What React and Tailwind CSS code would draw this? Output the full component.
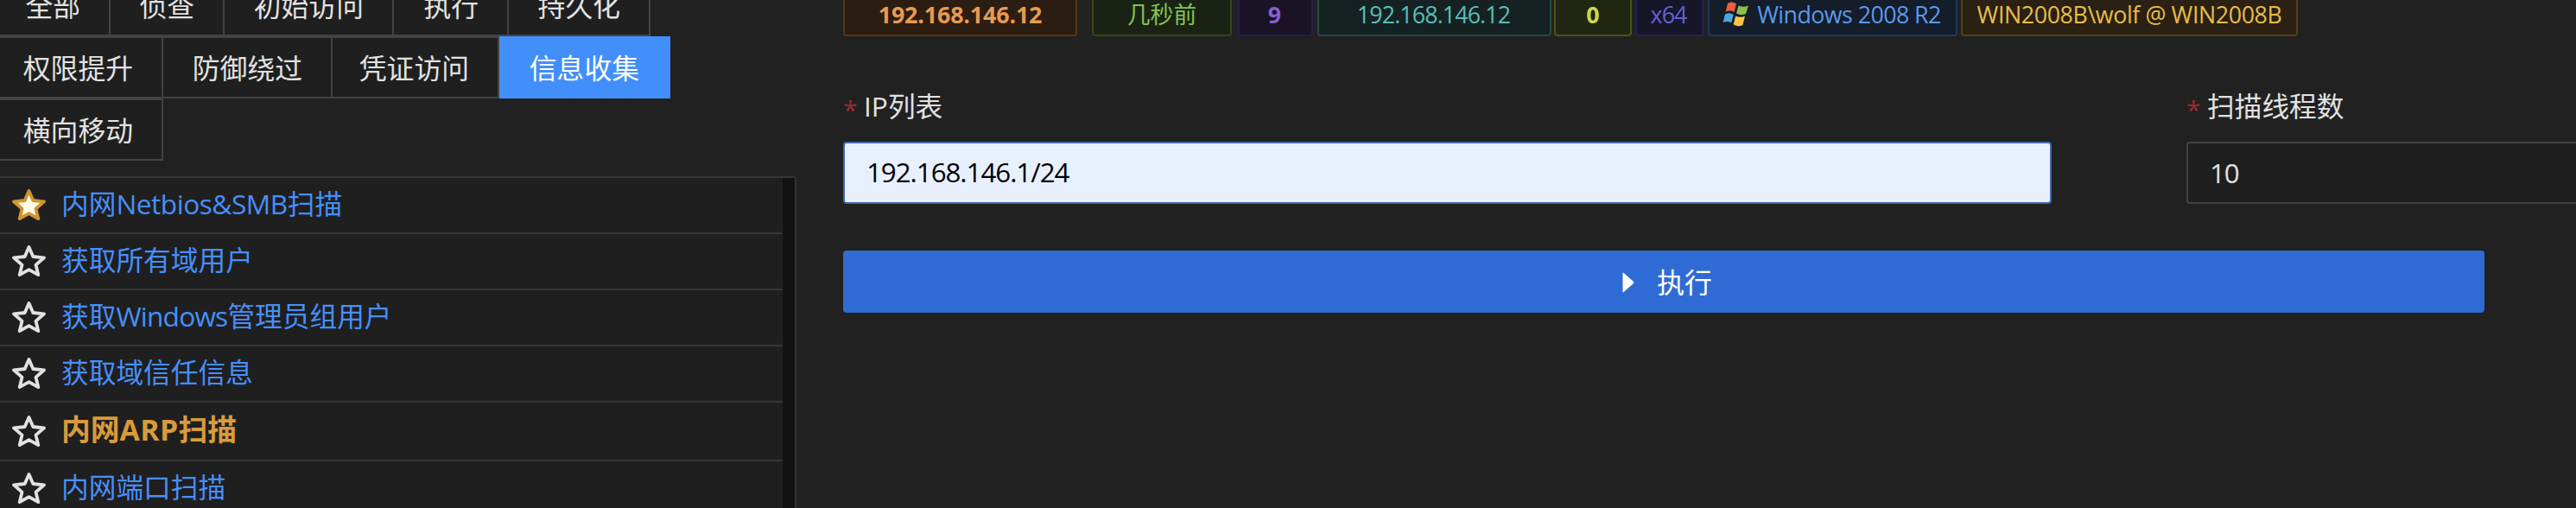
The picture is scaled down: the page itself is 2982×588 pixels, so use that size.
const STAR = "M19.5 3 L24.3 14 L37 15.3 L27.5 23.6 L30.3 35.2 L19.5 29.2 L8.7 35.2 L11.5 23.6 L2 15.3 L14.7 14 Z";

const tabRows = [
  [
    { label: "全部", width: "w-[128px]" },
    { label: "侦查", width: "w-[132px]" },
    { label: "初始访问", width: "w-[196px]" },
    { label: "执行", width: "w-[133px]" },
    { label: "持久化", width: "w-[164px]" },
  ],
  [
    { label: "权限提升", width: "w-[189px]" },
    { label: "防御绕过", width: "w-[196px]" },
    { label: "凭证访问", width: "w-[193px]" },
    { label: "信息收集", width: "w-[198px]", active: true },
  ],
  [{ label: "横向移动", width: "w-[189px]" }],
];

const modules = [
  { parts: ["内网", "Netbios&SMB", "扫描"], starred: true, tracking: "tracking-[-0.016em]" },
  { parts: ["获取所有域用户"] },
  { parts: ["获取", "Windows", "管理员组用户"], tracking: "tracking-[-0.026em]" },
  { parts: ["获取域信任信息"] },
  { parts: ["内网", "ARP", "扫描"], current: true, tracking: "tracking-[0.01em]" },
  { parts: ["内网端口扫描"] },
];

function Tab({ label, width, active }) {
  return (
    <div
      className={`flex h-[72px] shrink-0 items-center justify-end pt-[2px] text-[31.8px] leading-none ${width} ${
        active
          ? "bg-[#428ffb] pr-[36px] text-white"
          : "border-y-2 border-r-2 border-[#434343] bg-[#1f1f1f] pr-[33px] text-[#e2e2e2]"
      }`}
    >
      <span className="whitespace-nowrap">{label}</span>
    </div>
  );
}

function Star({ filled }) {
  return (
    <svg className="ml-[14px] mb-[1px] h-[38px] w-[39px] shrink-0" viewBox="0 0 39 38">
      <path
        d={STAR}
        fill={filled ? "#fffbe6" : "none"}
        stroke={filled ? "#d0952f" : "#e2e2e2"}
        strokeWidth="3.8"
        strokeLinejoin="round"
      />
    </svg>
  );
}

function Latin({ children, tracking = "tracking-[-0.033em]" }) {
  return <span className={tracking}>{children}</span>;
}

function ModuleRow({ parts, starred, current, tracking }) {
  return (
    <div
      className={`flex shrink-0 items-center border-b-2 border-[#363636] leading-none ${
        current ? "h-[68px] text-[33.8px] font-bold text-[#d89b3c]" : "h-[65px] text-[31.7px] text-[#478ffc]"
      }`}
    >
      <Star filled={starred} />
      <div className="ml-[18px] whitespace-nowrap pb-[3px]">
        {parts.map((part) =>
          /^[\x20-\x7e]+$/.test(part) ? (
            <Latin key={part} tracking={tracking}>{part}</Latin>
          ) : (
            <span key={part}>{part}</span>
          )
        )}
      </div>
    </div>
  );
}

function Tag({ className, children }) {
  return (
    <div
      className={`flex h-[50px] shrink-0 items-center justify-center whitespace-nowrap rounded-[4px] border-2 text-[26.8px] leading-none ${className}`}
    >
      {children}
    </div>
  );
}

function WindowsLogo() {
  return (
    <svg className="mr-[9px] h-[30px] w-[31px] shrink-0" viewBox="0 0 31 30">
      <path d="M6 2 Q11 -1 16 2.5 L13.5 12 Q9 9.5 3.5 11.5 Z" fill="#e8603c" />
      <path d="M18.5 4.5 Q24 7 30 4.5 L27 14 Q22 16.5 16 13.5 Z" fill="#8cc04b" />
      <path d="M3 14.5 Q8 11.8 12.7 15 L10.2 24.5 Q6 22 0.5 24 Z" fill="#4aa8e0" />
      <path d="M15.2 16.5 Q20.5 19 26 16.8 L23.4 27 Q18 30 12.6 26.3 Z" fill="#fcc544" />
    </svg>
  );
}

function Label({ children }) {
  return (
    <div className="flex h-[40px] items-center pb-[1px] text-[31.7px] leading-none text-[#e2e2e2]">
      <span className="w-[24px] pt-[8px] text-[30px] text-[#a32a2d]">*</span>
      <span className="whitespace-nowrap">{children}</span>
    </div>
  );
}

export default function App() {
  return (
    <div className="flex h-[588px] w-[2982px] overflow-hidden bg-[#212121] font-['Open_Sans','Noto_Sans_CJK_SC',sans-serif]">
      <aside className="flex w-[922px] shrink-0 flex-col">
        <div className="-mt-[30px]">
          {tabRows.map((row, i) => (
            <div key={i} className="flex">
              {row.map((tab) => (
                <Tab key={tab.label} {...tab} />
              ))}
            </div>
          ))}
        </div>
        <div className="mt-[18px] flex h-[400px] shrink-0 rounded-tr-[4px] border-r-2 border-t-2 border-[#363636] bg-[#1f1f1f]">
          <div className="flex flex-1 flex-col">
            {modules.map((m) => (
              <ModuleRow key={m.parts.join("")} {...m} />
            ))}
          </div>
          <div className="w-[14px] bg-[#121212]" />
        </div>
      </aside>

      <main className="ml-[54px] flex-1">
        <div className="-mt-[8px] flex">
          <Tag className="w-[271px] border-[#593716] bg-[#2b1d11] font-bold text-[#e89a52]">
            <Latin tracking="tracking-[-0.005em]">192.168.146.12</Latin>
          </Tag>
          <Tag className="ml-[17px] w-[162px] border-[#35461c] bg-[#1a2214] text-[#83c255]">几秒前</Tag>
          <Tag className="ml-[7px] w-[87px] border-[#271c50] bg-[#1a1325] pr-[2px] font-bold text-[#8560d0]">9</Tag>
          <Tag className="ml-[5px] w-[271px] border-[#274a48] bg-[#162122] pr-[2px] text-[#58bfb5]">
            <Latin>192.168.146.12</Latin>
          </Tag>
          <Tag className="ml-[3px] w-[90px] border-[#4a5418] bg-[#212612] font-bold text-[#c3dd50]">0</Tag>
          <Tag className="ml-[4px] w-[79px] border-[#242055] bg-[#171629] pr-[2px] text-[#6460cf]">
            <Latin>x64</Latin>
          </Tag>
          <Tag className="ml-[5px] w-[289px] border-[#1b3a5c] bg-[#141d29] pr-[2px] text-[#5a99ec]">
            <WindowsLogo />
            <Latin tracking="tracking-[-0.021em]">Windows 2008 R2</Latin>
          </Tag>
          <Tag className="ml-[4px] w-[390px] border-[#4d4515] bg-[#2a2013] text-[#e6bd4a]">
            <Latin tracking="tracking-[-0.015em]">WIN2008B\wolf @ WIN2008B</Latin>
          </Tag>
        </div>

        <div className="mt-[61px] flex">
          <div className="w-[1398px]">
            <Label>
              <Latin tracking="tracking-normal">IP</Latin>列表
            </Label>
          </div>
          <div className="ml-[157px]">
            <Label>扫描线程数</Label>
          </div>
        </div>

        <div className="mt-[21px] flex">
          <div className="flex h-[72px] w-[1399px] items-center rounded-[4px] border-2 border-[#3f68ac] bg-[#e8f0fe] pl-[25px] text-[31.3px] leading-none text-black">
            <Latin>192.168.146.1/24</Latin>
          </div>
          <div className="ml-[156px] flex h-[72px] flex-1 items-center rounded-l-[4px] border-2 border-r-0 border-[#434343] bg-[#1f1f1f] pl-[25px] pt-[1px] text-[31.3px] leading-none text-[#e2e2e2]">
            <Latin>10</Latin>
          </div>
        </div>

        <div className="mt-[54px] flex h-[72px] w-[1900px] items-center justify-center rounded-[4px] bg-[#2f6bd4] pl-[8px] pt-[1px] text-[31.8px] leading-none text-white">
          <svg className="mr-[26px] h-[24px] w-[14px]" viewBox="0 0 14 24">
            <path d="M0.5 1.5 Q0.5 0 1.7 1 L13 11 Q14 12 13 13 L1.7 23 Q0.5 24 0.5 22.5 Z" fill="white" />
          </svg>
          <span>执行</span>
        </div>
      </main>
    </div>
  );
}
